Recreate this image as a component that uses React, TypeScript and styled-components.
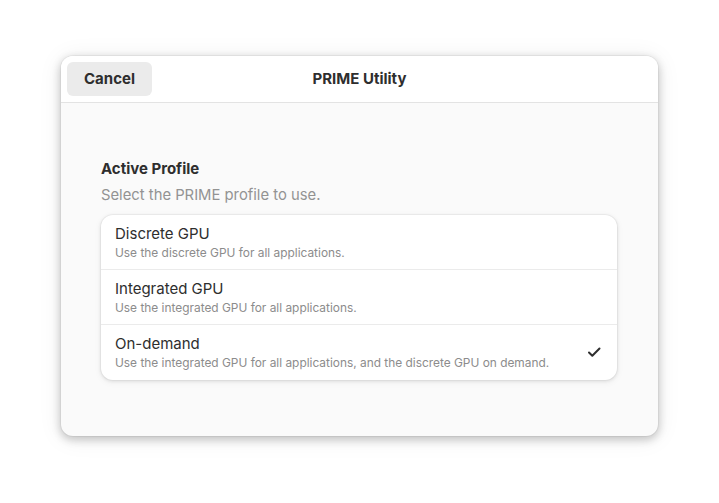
import React from "react";
import styled, { createGlobalStyle } from "styled-components";

const Global = createGlobalStyle`
  html, body { margin: 0; padding: 0; background: #ffffff; }
  body { font-family: Inter, "Noto Sans", sans-serif; -webkit-font-smoothing: antialiased; }
  * { box-sizing: border-box; }
`;

const Page = styled.div`
  width: 719px;
  height: 503px;
  padding: 56px 61px 67px;
  display: flex;
`;

const Window = styled.div`
  flex: 1;
  display: flex;
  flex-direction: column;
  background: #fafafa;
  border-radius: 12px;
  overflow: hidden;
  box-shadow: 0 0 0 1px rgba(0, 0, 0, 0.04), 0 3px 9px 1px rgba(0, 0, 0, 0.2), 0 2px 24px rgba(0, 0, 0, 0.08);
`;

const HeaderBar = styled.div`
  height: 47px;
  flex: none;
  display: grid;
  grid-template-columns: 1fr auto 1fr;
  align-items: center;
  padding: 0 6px 1px;
  background: #ffffff;
  border-bottom: 1px solid #e3e3e3;
`;

const Button = styled.button`
  justify-self: start;
  width: 85px;
  height: 34px;
  border: none;
  border-radius: 6px;
  background: #ebebeb;
  color: #2e2e2e;
  font-family: inherit;
  font-size: 15px;
  font-weight: 700;
  padding: 0;
`;

const Title = styled.div`
  font-size: 15px;
  font-weight: 700;
  color: #2e2e2e;
`;

const Body = styled.div`
  flex: 1;
  display: flex;
  flex-direction: column;
  padding: 56px 41px 0 40px;
`;

const GroupTitle = styled.div`
  font-size: 15px;
  font-weight: 700;
  color: #2e2e2e;
  line-height: 20px;
`;

const GroupDesc = styled.div`
  font-size: 14.8px;
  color: #939393;
  line-height: 20px;
  margin-top: 6px;
  margin-bottom: 10px;
`;

const List = styled.div`
  background: #ffffff;
  border-radius: 12px;
  box-shadow: 0 0 0 1px rgba(0, 0, 0, 0.03), 0 1px 3px 1px rgba(0, 0, 0, 0.07), 0 2px 6px 2px rgba(0, 0, 0, 0.03);
  display: flex;
  flex-direction: column;
`;

const Row = styled.div<{ $last?: boolean }>`
  height: 55px;
  display: flex;
  align-items: center;
  padding: 0 15px 0 14px;
  border-bottom: ${(p) => (p.$last ? "none" : "1px solid #ebebeb")};
`;

const RowText = styled.div`
  flex: 1;
  display: flex;
  flex-direction: column;
  padding-top: 1px;
`;

const RowTitle = styled.div`
  font-size: 15px;
  color: #2e2e2e;
  line-height: 20px;
`;

const RowSub = styled.div`
  font-size: 11.9px;
  color: #8c8c8c;
  line-height: 18px;
`;

const Check = styled.svg`
  width: 16px;
  height: 16px;
  flex: none;
  margin-bottom: 2px;
`;

const rows = [
  { t: "Discrete GPU", s: "Use the discrete GPU for all applications." },
  { t: "Integrated GPU", s: "Use the integrated GPU for all applications." },
  { t: "On-demand", s: "Use the integrated GPU for all applications, and the discrete GPU on demand.", checked: true },
];

export default function App() {
  return (
    <>
      <Global />
      <Page>
        <Window>
          <HeaderBar>
            <Button>Cancel</Button>
            <Title>PRIME Utility</Title>
            <div />
          </HeaderBar>
          <Body>
            <GroupTitle>Active Profile</GroupTitle>
            <GroupDesc>Select the PRIME profile to use.</GroupDesc>
            <List>
              {rows.map((r, i) => (
                <Row key={r.t} $last={i === rows.length - 1}>
                  <RowText>
                    <RowTitle>{r.t}</RowTitle>
                    <RowSub>{r.s}</RowSub>
                  </RowText>
                  {r.checked && (
                    <Check viewBox="0 0 16 16">
                      <path d="M3 8.5 L6.3 11.8 L13.5 4.5" fill="none" stroke="#2e2e2e" strokeWidth="2" strokeLinecap="round" strokeLinejoin="round" />
                    </Check>
                  )}
                </Row>
              ))}
            </List>
          </Body>
        </Window>
      </Page>
    </>
  );
}
